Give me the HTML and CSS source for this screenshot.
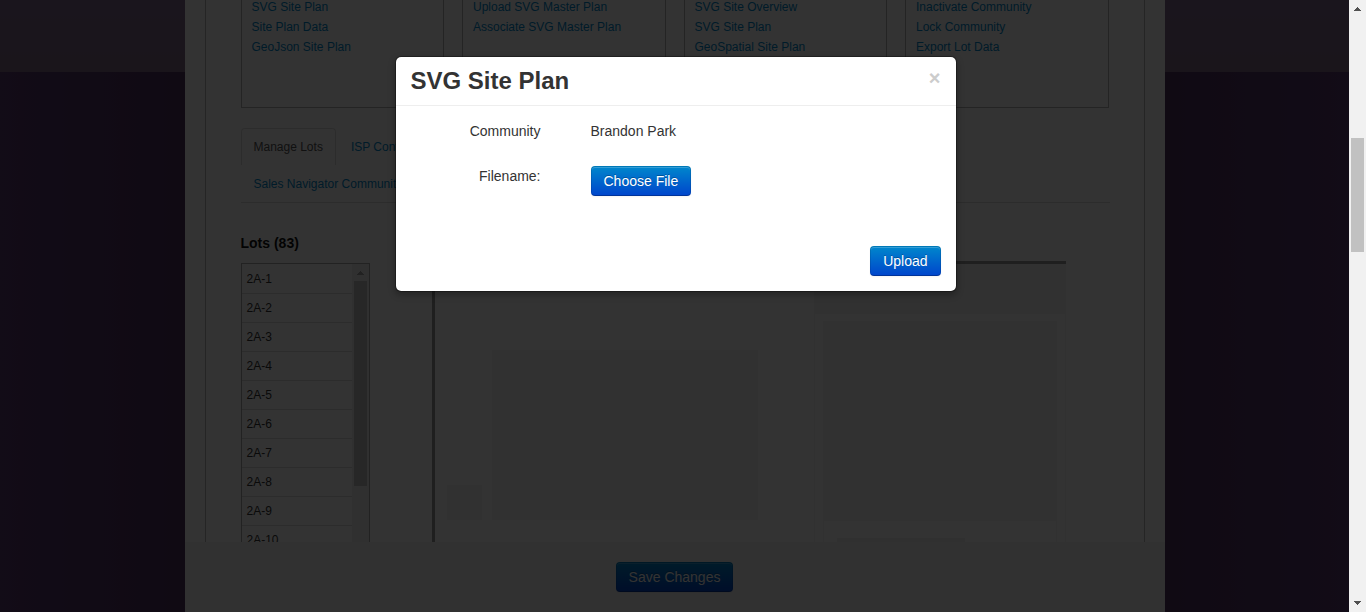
FILE: index.html
```html
<!DOCTYPE html>
<html lang="en">
<head>
<meta charset="utf-8">
<title>SVG Site Plan</title>
<link rel="stylesheet" href="styles.css">
</head>
<body>
<div class="window">
  <div class="viewport">
    <div class="container">
      <main class="content">
        <div class="panel">
          <div class="link-boxes">
            <ul class="link-box">
              <li><a href="#">SVG Site Plan</a></li>
              <li><a href="#">Site Plan Data</a></li>
              <li><a href="#">GeoJson Site Plan</a></li>
            </ul>
            <ul class="link-box">
              <li><a href="#">Upload SVG Master Plan</a></li>
              <li><a href="#">Associate SVG Master Plan</a></li>
            </ul>
            <ul class="link-box">
              <li><a href="#">SVG Site Overview</a></li>
              <li><a href="#">SVG Site Plan</a></li>
              <li><a href="#">GeoSpatial Site Plan</a></li>
            </ul>
            <ul class="link-box">
              <li><a href="#">Inactivate Community</a></li>
              <li><a href="#">Lock Community</a></li>
              <li><a href="#">Export Lot Data</a></li>
            </ul>
          </div>
          <nav class="tabs">
            <div class="tab-row">
              <a class="tab active" href="#">Manage Lots</a>
              <a class="tab" href="#">ISP Config</a>
            </div>
            <div class="tab-row">
              <a class="tab" href="#">Sales Navigator Community</a>
            </div>
          </nav>
          <div class="lots">
            <section class="lots-side">
              <h2 class="lots-title">Lots (83)</h2>
              <div class="lot-list">
                <ul class="lot-items">
                  <li>2A-1</li>
                  <li>2A-2</li>
                  <li>2A-3</li>
                  <li>2A-4</li>
                  <li>2A-5</li>
                  <li>2A-6</li>
                  <li>2A-7</li>
                  <li>2A-8</li>
                  <li>2A-9</li>
                  <li>2A-10</li>
                </ul>
                <div class="scrollbar">
                  <svg class="arrow arrow-off" viewBox="0 0 17 17"><path d="M5 11h7v-1h-1V9h-1V8H9V7H8v1H7v1H6v1H5z"/></svg>
                  <div class="list-thumb"></div>
                </div>
              </div>
            </section>
            <section class="map">
              <div class="map-stage">
                <div class="map-tile"></div>
                <div class="map-plan"></div>
              </div>
              <div class="map-side">
                <div class="map-head"></div>
                <div class="map-card">
                  <div class="map-photo"></div>
                  <div class="map-line"></div>
                </div>
              </div>
            </section>
          </div>
        </div>
      </main>
      <footer class="footer">
        <button class="btn" type="button">Save Changes</button>
      </footer>
    </div>
    <div class="backdrop"></div>
    <div class="modal" role="dialog" aria-labelledby="modal-title">
      <header class="modal-header">
        <h3 class="modal-title" id="modal-title">SVG Site Plan</h3>
        <button class="close" type="button" aria-label="Close">×</button>
      </header>
      <form class="modal-body">
        <div class="fields">
          <span class="field-label">Community</span>
          <span>Brandon Park</span>
          <label class="field-label" for="choose">Filename:</label>
          <div><button class="btn" type="button" id="choose" aria-label="Choose File">Choose File</button></div>
        </div>
        <div class="actions">
          <button class="btn" type="button">Upload</button>
        </div>
      </form>
    </div>
  </div>
  <div class="scrollbar page-scrollbar">
    <svg class="arrow" viewBox="0 0 17 17"><path d="M5 11h7v-1h-1V9h-1V8H9V7H8v1H7v1H6v1H5z"/></svg>
    <div class="track"><div class="page-thumb"></div></div>
    <svg class="arrow" viewBox="0 0 17 17"><path d="M5 6h7v1h-1v1h-1v1H9v1H8V9H7V8H6V7H5z"/></svg>
  </div>
</div>
</body>
</html>
```

FILE: styles.css
```css
* {
  box-sizing: border-box;
}

body {
  margin: 0;
  font-family: "Liberation Sans", Arial, sans-serif;
  font-size: 14px;
  line-height: 20px;
  color: #333;
}

ul,
h2,
h3 {
  margin: 0;
  padding: 0;
  list-style: none;
}

a {
  color: #08c;
  text-decoration: none;
}

.window {
  display: flex;
  height: 100vh;
  overflow: hidden;
}

.viewport {
  position: relative;
  flex: 1;
  min-width: 0;
  background:
    linear-gradient(#826991, #826987) top / 100% 72px no-repeat,
    linear-gradient(90deg, #5a3c73, #50325f 15%, #50325f 85%, #5a3c73);
}

.container {
  display: flex;
  flex-direction: column;
  max-width: 980px;
  height: 100%;
  margin: 0 auto;
  background: #fff;
}

.content {
  flex: 1;
  min-height: 0;
  overflow: hidden;
  padding: 0 20px;
}

.panel {
  padding: 0 34px 0 35px;
  border: 1px solid #bbb;
  border-width: 0 1px;
}

.link-boxes {
  display: grid;
  grid-template-columns: repeat(4, 1fr);
  gap: 18px;
  height: 108px;
  margin-right: 1px;
  font-size: 12px;
}

.link-box {
  margin-top: -3px;
  padding: 0 10px;
  border: 1px solid #b3b3b3;
  border-top: 0;
}

.tabs {
  margin-top: 20px;
  border-bottom: 1px solid #ddd;
  font-size: 12px;
}

.tab-row {
  display: flex;
  gap: 2px;
  height: 37px;
}

.tab {
  padding: 8px 12px;
  border: 1px solid transparent;
  border-bottom: 0;
  border-radius: 4px 4px 0 0;
}

.tab.active {
  border-color: #ddd;
  color: #555;
}

.lots {
  display: flex;
  gap: 62px;
  margin-top: 30px;
}

.lots-side {
  width: 129px;
}

.lots-title {
  color: #111;
  font-size: 14px;
  line-height: 20px;
}

.lot-list {
  display: flex;
  height: 360px;
  margin-top: 10px;
  border: 1px solid #aaa;
  overflow: hidden;
}

.lot-items {
  flex: 1;
  padding-top: 1px;
  font-size: 12px;
}

.lot-items li {
  height: 29px;
  padding: 4px 5px;
  border-bottom: 1px solid #ddd;
}

.scrollbar {
  display: flex;
  flex-direction: column;
  width: 17px;
  background: #f1f1f1;
}

.arrow {
  display: block;
  width: 17px;
  height: 17px;
  fill: #505050;
}

.arrow-off {
  fill: #a3a3a3;
}

.list-thumb {
  width: 13px;
  height: 205px;
  margin: 0 auto;
  background: #c1c1c1;
}

.map {
  display: flex;
  flex: 1;
  height: 380px;
  margin: 28px 44px 0 0;
  border-top: 3px solid #999;
  border-left: 3px solid #999;
}

.map-stage {
  display: flex;
  flex: 1;
  align-items: flex-end;
  gap: 10px;
  height: 256px;
  padding-left: 12px;
}

.map-tile {
  width: 35px;
  height: 35px;
  background: #f6f6f6;
}

.map-plan {
  width: 266px;
  height: 170px;
  background: #f3f3f3;
}

.map-side {
  width: 252px;
  border: 1px solid #f3f3f3;
  border-width: 0 1px;
}

.map-head {
  height: 50px;
  background: #f5f5f5;
}

.map-card {
  height: 300px;
  margin: 7px 8px 0;
  border: 1px solid #f3f3f3;
}

.map-photo {
  height: 199px;
  background: #f3f3f3;
}

.map-line {
  width: 128px;
  height: 10px;
  margin: 17px 13px;
  background: #f0f0f0;
}

.footer {
  display: flex;
  align-items: center;
  justify-content: center;
  height: 70px;
  background: #f5f5f5;
}

.btn {
  height: 30px;
  padding: 4px 12px;
  border: 1px solid rgba(0, 0, 0, 0.1);
  border-bottom-color: rgba(0, 0, 0, 0.25);
  border-radius: 4px;
  background: linear-gradient(#08c, #04c) border-box;
  box-shadow: inset 0 1px 0 rgba(255, 255, 255, 0.2), 0 1px 2px rgba(0, 0, 0, 0.05);
  color: #fff;
  font: inherit;
  text-shadow: 0 -1px 0 rgba(0, 0, 0, 0.25);
}

.backdrop {
  position: absolute;
  inset: 0;
  background: rgba(0, 0, 0, 0.8);
}

.modal {
  position: absolute;
  top: 56px;
  left: 50%;
  width: 562px;
  margin-left: -280px;
  border: 1px solid rgba(0, 0, 0, 0.3);
  border-radius: 6px;
  background: #fff padding-box;
  box-shadow: 0 3px 7px rgba(0, 0, 0, 0.3);
}

.modal-header {
  display: flex;
  align-items: flex-start;
  justify-content: space-between;
  padding: 9px 15px;
  border-bottom: 1px solid #eee;
}

.modal-title {
  font-size: 24px;
  line-height: 30px;
}

.close {
  margin-top: 2px;
  padding: 0;
  border: 0;
  background: none;
  color: #ccc;
  font-family: inherit;
  font-size: 20px;
  font-weight: bold;
  line-height: 20px;
}

.modal-body {
  padding: 15px;
}

.fields {
  display: grid;
  grid-template-columns: 130px 1fr;
  gap: 25px 50px;
}

.field-label {
  text-align: right;
}

.actions {
  display: flex;
  justify-content: flex-end;
  margin-top: 50px;
}

.track {
  flex: 1;
}

.page-thumb {
  width: 13px;
  height: 114px;
  margin: 121px auto 0;
  background: #c1c1c1;
}
```
